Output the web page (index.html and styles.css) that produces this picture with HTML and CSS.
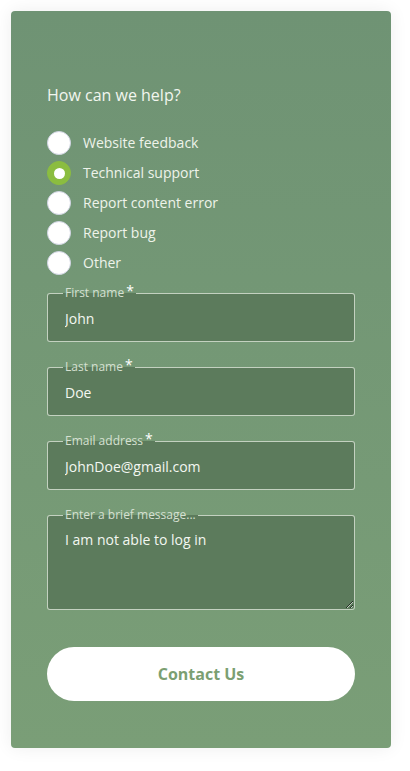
FILE: index.html
```html
<!DOCTYPE html>
<html lang="en">
<head>
<meta charset="utf-8">
<title>Contact</title>
<link rel="stylesheet" href="styles.css">
</head>
<body>
<form class="card">
  <h2 class="title">How can we help?</h2>
  <div class="radios">
    <label class="radio"><span class="dot"></span><span class="rlabel">Website feedback</span></label>
    <label class="radio"><span class="dot checked"></span><span class="rlabel">Technical support</span></label>
    <label class="radio"><span class="dot"></span><span class="rlabel">Report content error</span></label>
    <label class="radio"><span class="dot"></span><span class="rlabel">Report bug</span></label>
    <label class="radio"><span class="dot"></span><span class="rlabel">Other</span></label>
  </div>
  <fieldset class="field">
    <legend class="legend">First name<span class="req">*</span></legend>
    <input class="input" type="text" value="John">
  </fieldset>
  <fieldset class="field">
    <legend class="legend">Last name<span class="req">*</span></legend>
    <input class="input" type="text" value="Doe">
  </fieldset>
  <fieldset class="field">
    <legend class="legend">Email address<span class="req">*</span></legend>
    <input class="input" type="text" value="JohnDoe@gmail.com">
  </fieldset>
  <fieldset class="field field-last">
    <legend class="legend">Enter a brief message...</legend>
    <textarea class="textarea">I am not able to log in</textarea>
  </fieldset>
  <button class="button" type="button">Contact Us</button>
</form>
</body>
</html>
```
FILE: styles.css
```css
html, body {
  margin: 0;
  padding: 0;
  background: #ffffff;
}
body {
  font-family: "Open Sans", "Liberation Sans", sans-serif;
  padding: 11px 19px 23px 11px;
}
.card {
  width: 380px;
  box-sizing: border-box;
  padding: 73px 36px 47px 36px;
  border-radius: 4px;
  background: linear-gradient(to bottom, #6f9374, #7a9e77);
  box-shadow: 0 0 18px rgba(0, 0, 0, 0.07);
  display: flex;
  flex-direction: column;
}
.title {
  margin: 0 0 25px 0;
  font-size: 16px;
  line-height: 22px;
  font-weight: 400;
  color: #f2f6ef;
}
.radios {
  display: flex;
  flex-direction: column;
  gap: 6px;
  margin-bottom: 11px;
}
.radio {
  display: flex;
  align-items: center;
  gap: 12px;
  height: 24px;
}
.dot {
  width: 24px;
  height: 24px;
  box-sizing: border-box;
  border-radius: 50%;
  background: #ffffff;
  border: 1px solid #cfd3e2;
  display: flex;
  align-items: center;
  justify-content: center;
}
.dot.checked {
  background: #8bbd40;
  border-color: #8bbd40;
}
.dot.checked::after {
  content: "";
  width: 11px;
  height: 11px;
  border-radius: 50%;
  background: #ffffff;
}
.rlabel {
  font-size: 14px;
  line-height: 20px;
  color: #eef3ea;
}
.field {
  margin: 0 0 18px 0;
  padding: 0;
  border: 1px solid rgba(230, 238, 226, 0.75);
  border-radius: 3px;
  background: #5c7b5c;
  min-width: 0;
}
.field-last {
  margin-bottom: 37px;
}
.legend {
  margin-left: 15px;
  padding: 0 2px;
  font-size: 12px;
  line-height: 14px;
  color: #d6e0d2;
}
.req {
  color: #ffffff;
  font-size: 14px;
  line-height: 10px;
  vertical-align: top;
  margin-left: 2px;
}
.input {
  display: block;
  width: 100%;
  box-sizing: border-box;
  height: 41px;
  margin: 0;
  padding: 8px 17px 13px 17px;
  border: 0;
  outline: 0;
  background: transparent;
  font-family: "Open Sans", "Liberation Sans", sans-serif;
  font-size: 14px;
  line-height: 20px;
  color: #f3f7f1;
}
.textarea {
  display: block;
  width: 100%;
  box-sizing: border-box;
  height: 87px;
  margin: 0;
  padding: 8px 17px;
  border: 0;
  outline: 0;
  background: transparent;
  font-family: "Open Sans", "Liberation Sans", sans-serif;
  font-size: 14px;
  line-height: 20px;
  color: #f3f7f1;
  resize: vertical;
}
.button {
  height: 54px;
  border: 0;
  border-radius: 27px;
  background: #ffffff;
  font-family: "Open Sans", "Liberation Sans", sans-serif;
  font-size: 16px;
  font-weight: 700;
  color: #7b9f72;
  cursor: pointer;
}
```
